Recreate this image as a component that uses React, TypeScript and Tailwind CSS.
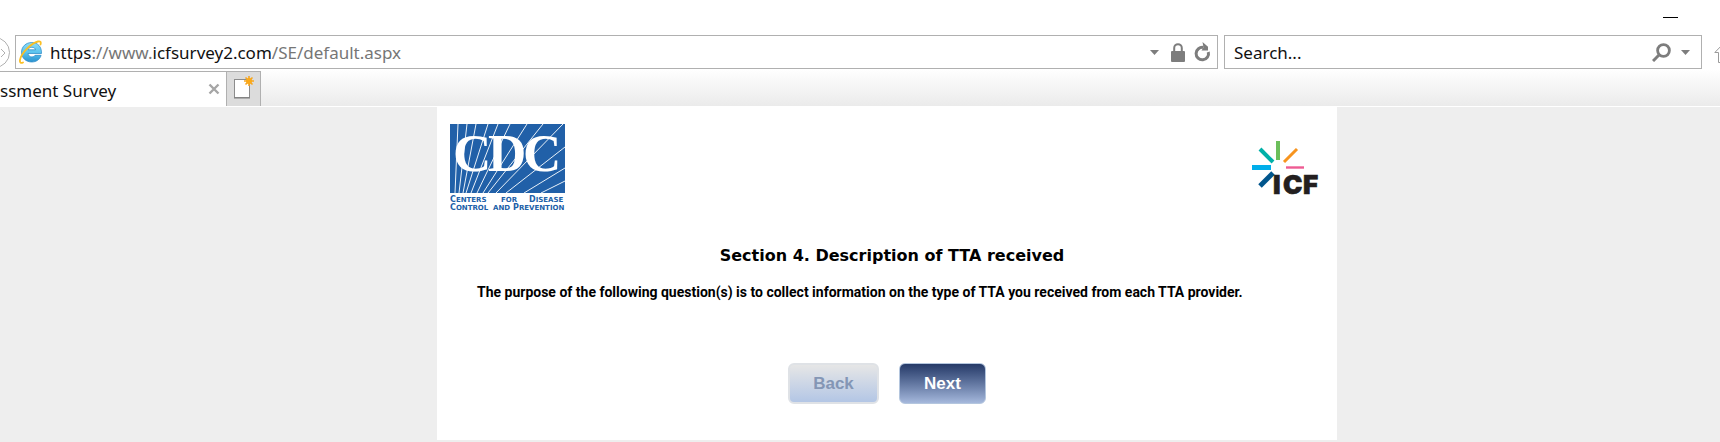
import type { ReactNode } from "react";

// Rays behind the CDC letters: [x, y] on the top or right edge, then x on the bottom edge
const RAYS = [
  [8, 0, 5], [17, 0, 9], [26, 0, 13], [38, 0, 16], [48, 0, 21], [60, 0, 27],
  [77, 0, 33], [93, 0, 38], [113, 0, 46], [115, 23, 56], [115, 44, 74], [115, 57, 91],
];

const CAPTION = [
  { cap: "C", rest: "ENTERS", x: 0, y: 78 },
  { cap: "", rest: "FOR", x: 51, y: 78 },
  { cap: "D", rest: "ISEASE", x: 79, y: 78 },
  { cap: "C", rest: "ONTROL", x: 0, y: 86 },
  { cap: "", rest: "AND", x: 43, y: 86 },
  { cap: "P", rest: "REVENTION", x: 63, y: 86 },
];

function CdcLogo() {
  return (
    <svg viewBox="0 0 122 90" className="h-[90px] w-[122px]" role="img" aria-label="Centers for Disease Control and Prevention">
      <rect width="115" height="69" fill="#2160a8" />
      {RAYS.map(([x, y, base]) => (
        <line key={base} x1={x} y1={y} x2={base} y2="69" stroke="#e8f0f8" strokeWidth="1" />
      ))}
      <g fontSize="53" fontWeight="bold" fill="#fff" fontFamily="Liberation Serif, serif">
        <text x="3" y="47">C</text>
        <text x="38" y="47">D</text>
        <text x="73" y="47">C</text>
      </g>
      <g fontSize="7" fontWeight="bold" fill="#2160a8" fontFamily="DejaVu Sans, sans-serif">
        {CAPTION.map(({ cap, rest, x, y }) => (
          <text key={rest} x={x} y={y}>
            <tspan fontSize="8">{cap}</tspan>
            {rest}
          </text>
        ))}
      </g>
    </svg>
  );
}

function IcfLogo() {
  return (
    <svg viewBox="0 0 72 64" className="h-16 w-[72px]" role="img" aria-label="ICF">
      <path d="M26 0v19" stroke="#6cbf5b" strokeWidth="4" />
      <path d="M8 8l13 13" stroke="#00b0a8" strokeWidth="4" />
      <path d="M45 8L32 21" stroke="#f7941e" strokeWidth="3" />
      <path d="M0 26.5h19" stroke="#00aeea" strokeWidth="5" />
      <path d="M34 26.5h18" stroke="#ee5b92" strokeWidth="2.4" />
      <path d="M21 32L8 45" stroke="#00558c" strokeWidth="5" />
      <g fontSize="26" fontWeight="900" fill="#231f20" stroke="#231f20" strokeWidth="0.6" fontFamily="Inter, sans-serif">
        <text x="21" y="53">I</text>
        <text x="31" y="53">C</text>
        <text x="51" y="53">F</text>
      </g>
    </svg>
  );
}

function IeIcon() {
  return (
    <svg viewBox="0 0 24 24" className="h-6 w-6 shrink-0" aria-hidden="true">
      <defs>
        <linearGradient id="ie" x1="0" y1="0" x2="0" y2="1">
          <stop offset="0" stopColor="#8fdcf8" />
          <stop offset="0.5" stopColor="#5cc4ee" />
          <stop offset="1" stopColor="#2a92d0" />
        </linearGradient>
      </defs>
      <path
        d="M22.500 13.500H9c.2 2 1.700 3.400 3.900 3.400 1.500 0 2.600-.6 3.200-1.600h6C20.800 19.600 17.300 22 12.800 22 7 22 2.500 18 2.500 12.300S7 2.500 12.800 2.500c6 0 10 4.300 9.700 11zM16.500 9.800C16.200 8.300 14.800 7.300 12.900 7.300S9.500 8.300 9.100 9.800z"
        fill="url(#ie)"
        fillRule="evenodd"
        stroke="#2485c4"
        strokeWidth="0.7"
      />
      <path d="M4 22.500C1.800 23.600.6 22.400 1 20 2.200 13 12.500 3 19 1.500c2.400-.5 3.300.6 2.500 3" fill="none" stroke="#fbbf24" strokeWidth="1.800" strokeLinecap="round" />
    </svg>
  );
}

function Caret() {
  return (
    <svg viewBox="0 0 9 5" className="h-[5px] w-[9px]" aria-hidden="true">
      <path d="M0 0h9L4.500 5z" fill="#7d7d7d" />
    </svg>
  );
}

function LockIcon() {
  return (
    <svg viewBox="0 0 14 19" className="h-[19px] w-[14px] shrink-0" aria-hidden="true">
      <path d="M3.200 9V5a3.800 3.800 0 0 1 7.600 0v4" fill="none" stroke="#7d7d7d" strokeWidth="2" />
      <rect y="8" width="14" height="11" rx="1" fill="#7d7d7d" />
    </svg>
  );
}

function RefreshIcon() {
  return (
    <svg viewBox="0 0 17 20" className="h-5 w-[17px]" aria-hidden="true">
      <path d="M9.500 5.500A6.200 6.200 0 1 0 14.300 10" fill="none" stroke="#7d7d7d" strokeWidth="3" />
      <path d="M8.500 0l5.500 4.800v3.700H7.500l2-3z" fill="#7d7d7d" />
    </svg>
  );
}

function SearchIcon() {
  return (
    <svg viewBox="0 0 19 19" className="h-[19px] w-[19px]" aria-hidden="true">
      <circle cx="11.500" cy="7.500" r="5.900" fill="none" stroke="#7d7d7d" strokeWidth="2.800" />
      <path d="M7.500 11.500L1 18" stroke="#7d7d7d" strokeWidth="3" />
    </svg>
  );
}

function NewTabIcon() {
  return (
    <svg viewBox="0 0 22 24" className="h-6 w-[22px]" aria-hidden="true">
      <rect x="1.500" y="3.500" width="15" height="18" fill="#fff" stroke="#8c8c8c" />
      <path d="M1 22h16" stroke="#7d7d7d" />
      <path d="M16 0v10M11 5h10M12.500 1.500l7 7M19.500 1.500l-7 7" stroke="#f5a623" strokeWidth="1.600" />
      <circle cx="16" cy="5" r="3" fill="#fba918" />
    </svg>
  );
}

function IconButton({ label, className = "", children }: { label: string; className?: string; children: ReactNode }) {
  return (
    <button type="button" aria-label={label} className={`flex shrink-0 items-center justify-center ${className}`}>
      {children}
    </button>
  );
}

function BrowserChrome() {
  return (
    <header className="bg-white font-['Noto_Sans',sans-serif] text-[17px] leading-6">
      <div className="flex h-[35px] items-center justify-end pr-[42px]">
        <IconButton label="Minimize" className="h-4">
          <span className="block h-px w-[15px] bg-black" />
        </IconButton>
      </div>

      <div className="flex h-[34px] overflow-hidden">
        <IconButton label="Forward" className="-ml-[21px] mr-[5px] mt-[2px] h-[31px] w-[31px] rounded-full border border-[#b0b0b0]">
          <svg viewBox="0 0 8 10" className="ml-[14px] h-[10px] w-2" aria-hidden="true">
            <path d="M3 1l4 4-4 4" fill="none" stroke="#b0b0b0" />
          </svg>
        </IconButton>

        <div className="mr-1.5 flex min-w-0 flex-1 items-center border border-[#b0b0b0] pl-[3px] pr-[6px]">
          <IeIcon />
          <div className="ml-[7px] flex-1 truncate pt-[2px] text-[#767676]">
            <span className="text-[#111]">https</span>://www.<span className="text-[#111]">icfsurvey2.com</span>/SE/default.aspx
          </div>
          <IconButton label="Show address bar list" className="h-6">
            <Caret />
          </IconButton>
          <span className="ml-3 mr-[9px] flex">
            <LockIcon />
          </span>
          <IconButton label="Refresh">
            <RefreshIcon />
          </IconButton>
        </div>

        <div className="flex w-[478px] items-center border border-[#b0b0b0] pl-[9px] pr-[11px]">
          <input
            type="text"
            aria-label="Search"
            placeholder="Search..."
            className="min-w-0 flex-1 bg-transparent pt-[2px] outline-none placeholder:text-[#111]"
          />
          <IconButton label="Search">
            <SearchIcon />
          </IconButton>
          <IconButton label="Search options" className="ml-[10px] h-6">
            <Caret />
          </IconButton>
        </div>

        <IconButton label="Home" className="ml-3 w-[6px] justify-start">
          <svg viewBox="0 0 24 24" className="h-6 w-6 shrink-0" aria-hidden="true">
            <path d="M4.500 22.500v-10H.8L12 1l11 11.500h-3.500v10z" fill="none" stroke="#9a9a9a" />
          </svg>
        </IconButton>
      </div>

      <div className="flex h-[38px] items-stretch border-b border-white bg-linear-to-b from-white to-[#ebebeb] pt-[2px]">
        <div className="flex w-[226px] items-center border-t border-[#b0b0b0] bg-white pt-1 pr-[6px] text-[#111]">
          <span className="flex-1 whitespace-nowrap">ssment Survey</span>
          <IconButton label="Close tab" className="pb-1">
            <svg viewBox="0 0 12 12" className="h-3 w-3" aria-hidden="true">
              <path d="M1.500 1.500l9 9M10.500 1.500l-9 9" stroke="#a6a6a6" strokeWidth="2.400" />
            </svg>
          </IconButton>
        </div>
        <IconButton label="New tab" className="w-[35px] border border-b-0 border-[#b0b0b0] bg-[#dcdcdc] pb-[2px]">
          <NewTabIcon />
        </IconButton>
      </div>
    </header>
  );
}

export default function App() {
  return (
    <div className="min-h-screen bg-[#eee] font-['Liberation_Sans',sans-serif] text-black">
      <BrowserChrome />

      <div className="pb-[2px] pl-[54px]">
        <main className="mx-auto max-w-[900px] bg-white pt-[17px] pb-9">
          <div className="flex items-start justify-between pl-[13px] pr-[13px]">
            <CdcLogo />
            <div className="pt-[17px]">
              <IcfLogo />
            </div>
          </div>

          <h1 className="mt-[30px] pl-[10px] text-center font-['DejaVu_Sans',sans-serif] text-[16px] leading-6 font-bold">
            Section 4. Description of TTA received
          </h1>
          <p className="mt-[14px] px-10 font-['Roboto',sans-serif] text-[14px] leading-5 font-bold">
            The purpose of the following question(s) is to collect information on the type of TTA you received from each TTA
            provider.
          </p>

          <div className="mt-[61px] flex justify-center gap-5 text-[17px] leading-6 font-bold">
            <button
              type="button"
              disabled
              className="h-[41px] w-[91px] rounded-md border-2 border-[#dfe2e6] bg-linear-to-b from-[#e6e6e6] to-[#b3c6e5] text-[#8496b5]"
            >
              Back
            </button>
            <button
              type="button"
              className="h-[41px] w-[87px] rounded-md border border-[#b4c6de] bg-linear-to-b from-[#263a68] to-[#a5b8dc] text-white"
            >
              Next
            </button>
          </div>
        </main>
      </div>
    </div>
  );
}
